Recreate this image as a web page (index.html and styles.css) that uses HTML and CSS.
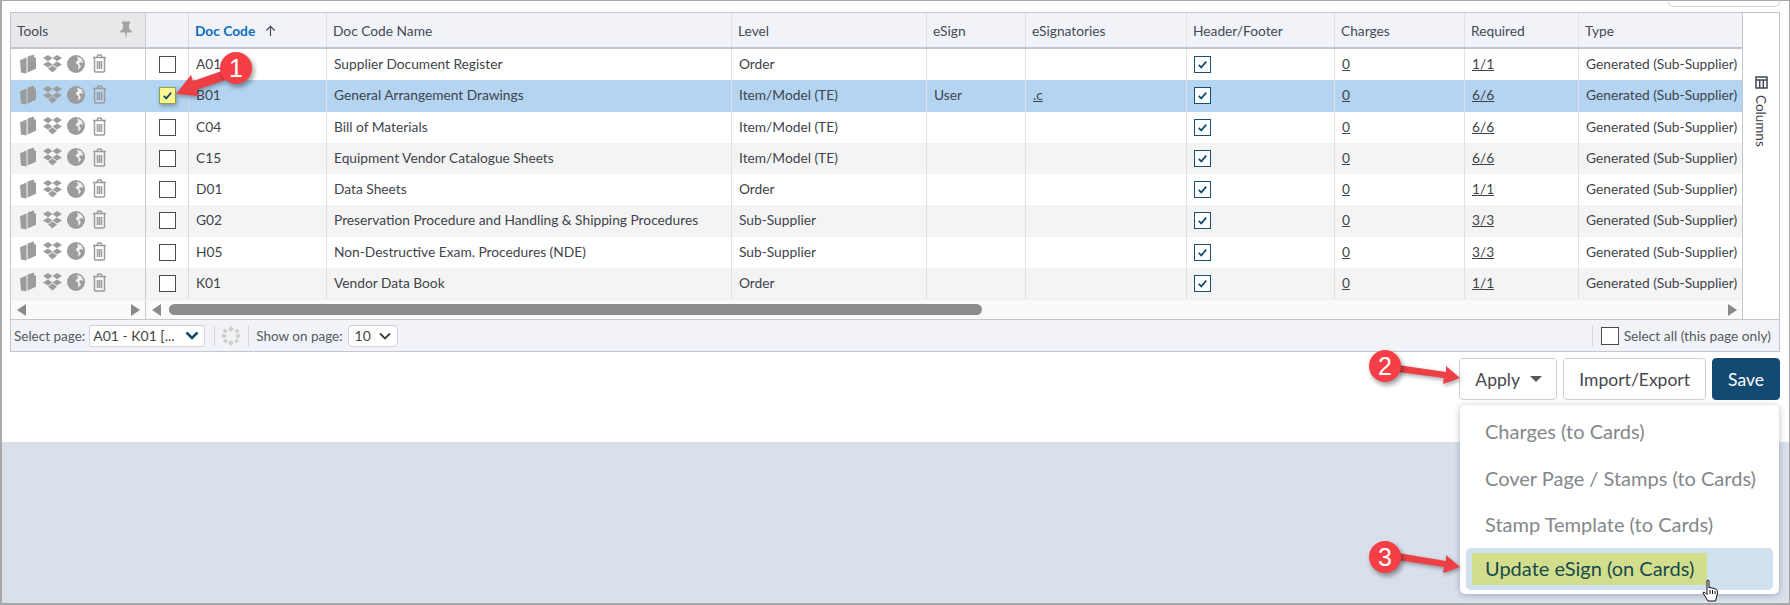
FILE: index.html
```html
<!DOCTYPE html>
<html lang="en">
<head>
<meta charset="utf-8">
<title>Doc Codes</title>
<link rel="stylesheet" href="styles.css">
</head>
<body>
<svg class="defs" width="0" height="0" aria-hidden="true">
  <symbol id="i-book" viewBox="0 0 17 20"><path d="M0 6 L7 3 L7 20 L1 19 Z M8 2 L15 0 L15 3 L17 3 L17 15 L8 19 Z" fill="currentColor"/></symbol>
  <symbol id="i-drop" viewBox="0 0 19 18"><path d="M5 0 L9.500 3 L5 6.200 L0 3 Z M14 0 L19 3 L14 6.200 L9.500 3 Z M5 6.400 L9.500 9.500 L5 12.600 L0 9.500 Z M14 6.400 L19 9.500 L14 12.600 L9.500 9.500 Z M5 13.600 L9.500 10.600 L14 13.600 L9.500 17.500 Z" fill="currentColor"/></symbol>
  <symbol id="i-globe" viewBox="0 0 18 18"><circle cx="9" cy="9" r="9" fill="currentColor"/><path d="M10 1.500 L14.500 3.500 L16.500 8 L14 7 L12 8.500 L14 11.500 L11 15 L11.500 10.500 L8.500 7.500 L11 5 Z" fill="#fff" opacity=".85"/></symbol>
  <symbol id="i-trash" viewBox="0 0 15 19"><path d="M1 3.500 H14 M5 3 L6 1 H9 L10 3 M2.500 4 V17 Q2.500 18 3.500 18 H11.500 Q12.500 18 12.500 17 V4 M5.500 7 V15 M7.500 7 V15 M9.500 7 V15" fill="none" stroke="currentColor" stroke-width="1.500"/></symbol>
  <symbol id="i-check" viewBox="0 0 18 18"><path d="M4.500 9.500 L7.500 12.500 L13.500 5.500" fill="none" stroke="#12486f" stroke-width="2"/></symbol>
</svg>

<div class="page">
  <section class="upper">
    <div class="stub"></div>
    <div class="grid">
      <div class="grid-main">
        <div class="row head">
          <div class="cell tools-head"><span>Tools</span>
            <svg class="pin" viewBox="0 0 12 17"><path d="M2 0 H10 V2 L9 3 V7 L12 10 V11 H7 L6 17 L5 11 H0 V10 L3 7 V3 L2 2 Z" fill="#a3a3a6"/></svg>
          </div>
          <div class="cell"></div>
          <div class="cell sorted">Doc Code
            <svg class="sort" viewBox="0 0 12 12"><path d="M6 12 V1.500 M1.500 6 L6 1.500 L10.500 6" fill="none" stroke="#444b55" stroke-width="1.300"/></svg>
          </div>
          <div class="cell">Doc Code Name</div>
          <div class="cell">Level</div>
          <div class="cell">eSign</div>
          <div class="cell">eSignatories</div>
          <div class="cell">Header/Footer</div>
          <div class="cell">Charges</div>
          <div class="cell">Required</div>
          <div class="cell">Type</div>
        </div>

        <div class="row">
          <div class="cell tools"><svg class="ic-book"><use href="#i-book"/></svg><svg class="ic-drop"><use href="#i-drop"/></svg><svg class="ic-globe"><use href="#i-globe"/></svg><svg class="ic-trash"><use href="#i-trash"/></svg></div>
          <div class="cell pick"><span class="box"></span></div>
          <div class="cell">A01</div>
          <div class="cell">Supplier Document Register</div>
          <div class="cell">Order</div>
          <div class="cell"></div>
          <div class="cell"></div>
          <div class="cell"><span class="box on"><svg><use href="#i-check"/></svg></span></div>
          <div class="cell"><a>0</a></div>
          <div class="cell"><a>1/1</a></div>
          <div class="cell">Generated (Sub-Supplier)</div>
        </div>

        <div class="row selected">
          <div class="cell tools"><svg class="ic-book"><use href="#i-book"/></svg><svg class="ic-drop"><use href="#i-drop"/></svg><svg class="ic-globe"><use href="#i-globe"/></svg><svg class="ic-trash"><use href="#i-trash"/></svg></div>
          <div class="cell pick"><span class="box marked"><svg><use href="#i-check"/></svg></span></div>
          <div class="cell">B01</div>
          <div class="cell">General Arrangement Drawings</div>
          <div class="cell">Item/Model (TE)</div>
          <div class="cell">User</div>
          <div class="cell"><a>.c</a></div>
          <div class="cell"><span class="box on"><svg><use href="#i-check"/></svg></span></div>
          <div class="cell"><a>0</a></div>
          <div class="cell"><a>6/6</a></div>
          <div class="cell">Generated (Sub-Supplier)</div>
        </div>

        <div class="row">
          <div class="cell tools"><svg class="ic-book"><use href="#i-book"/></svg><svg class="ic-drop"><use href="#i-drop"/></svg><svg class="ic-globe"><use href="#i-globe"/></svg><svg class="ic-trash"><use href="#i-trash"/></svg></div>
          <div class="cell pick"><span class="box"></span></div>
          <div class="cell">C04</div>
          <div class="cell">Bill of Materials</div>
          <div class="cell">Item/Model (TE)</div>
          <div class="cell"></div>
          <div class="cell"></div>
          <div class="cell"><span class="box on"><svg><use href="#i-check"/></svg></span></div>
          <div class="cell"><a>0</a></div>
          <div class="cell"><a>6/6</a></div>
          <div class="cell">Generated (Sub-Supplier)</div>
        </div>

        <div class="row alt">
          <div class="cell tools"><svg class="ic-book"><use href="#i-book"/></svg><svg class="ic-drop"><use href="#i-drop"/></svg><svg class="ic-globe"><use href="#i-globe"/></svg><svg class="ic-trash"><use href="#i-trash"/></svg></div>
          <div class="cell pick"><span class="box"></span></div>
          <div class="cell">C15</div>
          <div class="cell">Equipment Vendor Catalogue Sheets</div>
          <div class="cell">Item/Model (TE)</div>
          <div class="cell"></div>
          <div class="cell"></div>
          <div class="cell"><span class="box on"><svg><use href="#i-check"/></svg></span></div>
          <div class="cell"><a>0</a></div>
          <div class="cell"><a>6/6</a></div>
          <div class="cell">Generated (Sub-Supplier)</div>
        </div>

        <div class="row">
          <div class="cell tools"><svg class="ic-book"><use href="#i-book"/></svg><svg class="ic-drop"><use href="#i-drop"/></svg><svg class="ic-globe"><use href="#i-globe"/></svg><svg class="ic-trash"><use href="#i-trash"/></svg></div>
          <div class="cell pick"><span class="box"></span></div>
          <div class="cell">D01</div>
          <div class="cell">Data Sheets</div>
          <div class="cell">Order</div>
          <div class="cell"></div>
          <div class="cell"></div>
          <div class="cell"><span class="box on"><svg><use href="#i-check"/></svg></span></div>
          <div class="cell"><a>0</a></div>
          <div class="cell"><a>1/1</a></div>
          <div class="cell">Generated (Sub-Supplier)</div>
        </div>

        <div class="row alt">
          <div class="cell tools"><svg class="ic-book"><use href="#i-book"/></svg><svg class="ic-drop"><use href="#i-drop"/></svg><svg class="ic-globe"><use href="#i-globe"/></svg><svg class="ic-trash"><use href="#i-trash"/></svg></div>
          <div class="cell pick"><span class="box"></span></div>
          <div class="cell">G02</div>
          <div class="cell">Preservation Procedure and Handling &amp; Shipping Procedures</div>
          <div class="cell">Sub-Supplier</div>
          <div class="cell"></div>
          <div class="cell"></div>
          <div class="cell"><span class="box on"><svg><use href="#i-check"/></svg></span></div>
          <div class="cell"><a>0</a></div>
          <div class="cell"><a>3/3</a></div>
          <div class="cell">Generated (Sub-Supplier)</div>
        </div>

        <div class="row">
          <div class="cell tools"><svg class="ic-book"><use href="#i-book"/></svg><svg class="ic-drop"><use href="#i-drop"/></svg><svg class="ic-globe"><use href="#i-globe"/></svg><svg class="ic-trash"><use href="#i-trash"/></svg></div>
          <div class="cell pick"><span class="box"></span></div>
          <div class="cell">H05</div>
          <div class="cell">Non-Destructive Exam. Procedures (NDE)</div>
          <div class="cell">Sub-Supplier</div>
          <div class="cell"></div>
          <div class="cell"></div>
          <div class="cell"><span class="box on"><svg><use href="#i-check"/></svg></span></div>
          <div class="cell"><a>0</a></div>
          <div class="cell"><a>3/3</a></div>
          <div class="cell">Generated (Sub-Supplier)</div>
        </div>

        <div class="row alt">
          <div class="cell tools"><svg class="ic-book"><use href="#i-book"/></svg><svg class="ic-drop"><use href="#i-drop"/></svg><svg class="ic-globe"><use href="#i-globe"/></svg><svg class="ic-trash"><use href="#i-trash"/></svg></div>
          <div class="cell pick"><span class="box"></span></div>
          <div class="cell">K01</div>
          <div class="cell">Vendor Data Book</div>
          <div class="cell">Order</div>
          <div class="cell"></div>
          <div class="cell"></div>
          <div class="cell"><span class="box on"><svg><use href="#i-check"/></svg></span></div>
          <div class="cell"><a>0</a></div>
          <div class="cell"><a>1/1</a></div>
          <div class="cell">Generated (Sub-Supplier)</div>
        </div>

        <div class="scrollrow">
          <div class="scroll-left">
            <span class="arrow left"></span><span class="arrow right"></span>
          </div>
          <div class="scroll-right">
            <span class="arrow left"></span>
            <div class="track"><div class="thumb"></div></div>
            <span class="arrow right"></span>
          </div>
        </div>
      </div>

      <aside class="columns-tab">
        <svg class="columns-ic" viewBox="0 0 13 13"><path d="M1 1 H12 V12 H1 Z M1 4 H12 M4.700 4 V12 M8.300 4 V12" fill="none" stroke="#3d4650" stroke-width="1.500"/></svg>
        <span>Columns</span>
      </aside>

      <footer class="pager">
        <span>Select page:</span>
        <div class="select page-select"><span>A01 - K01 [...</span>
          <svg viewBox="0 0 14 9"><path d="M1.500 1.500 L7 7 L12.500 1.500" fill="none" stroke="#12486f" stroke-width="2.600"/></svg>
        </div>
        <i class="sep sep-a"></i>
        <svg class="spinner" viewBox="0 0 20 20"><g fill="#cfcfc9"><path d="M10 0 L13 3 L10 6 L7 3 Z"/><path d="M16 2.500 L18.500 5 L16 7.500 L13.500 5 Z"/><path d="M17 7.500 L20 10 L17 12.500 L14 10 Z"/><path d="M15.500 12.500 L18 15 L15.500 17.500 L13 15 Z"/><path d="M10 14 L13 17 L10 20 L7 17 Z"/><path d="M4.500 12.500 L7 15 L4.500 17.500 L2 15 Z"/><path d="M3 7.500 L6 10 L3 12.500 L0 10 Z"/><path d="M4 2.500 L6.500 5 L4 7.500 L1.500 5 Z"/></g></svg>
        <i class="sep sep-b"></i>
        <span>Show on page:</span>
        <div class="select size-select"><span>10</span>
          <svg viewBox="0 0 12 8"><path d="M1 1.500 L6 6.500 L11 1.500" fill="none" stroke="#3c3c3c" stroke-width="1.800"/></svg>
        </div>
        <div class="select-all">
          <i class="sep"></i>
          <span class="box plain"></span>
          <span>Select all (this page only)</span>
        </div>
      </footer>
    </div>

    <div class="actions">
      <button class="btn apply">Apply<span class="caret"></span></button>
      <button class="btn">Import/Export</button>
      <button class="btn primary">Save</button>
    </div>
  </section>
  <section class="lower"></section>

  <ul class="menu">
    <li>Charges (to Cards)</li>
    <li>Cover Page / Stamps (to Cards)</li>
    <li>Stamp Template (to Cards)</li>
    <li class="active"><span>Update eSign (on Cards)</span></li>
  </ul>

  <svg class="cursor" viewBox="0 0 16 23"><path d="M5 1.500 Q6.500 0.500 7 2 V9 L8 8.500 L10 9 L12 9.500 L14.500 10.500 Q15.500 11 15.500 14 L14 20 L13.500 22 H6 L1 14 Q1 12.500 3 13.500 L5 15.500 Z" fill="#fff" stroke="#111" stroke-width="1"/><path d="M8 11 V15 M10.500 11 V15 M13 12 V15" stroke="#111" stroke-width="1"/></svg>

  <svg class="annotations" viewBox="0 0 1790 605">
    <g class="arrow-mark">
      <path d="M222 71 L193 81 L191 75 L176 94 L199 96 L196 90 L225 80 Z"/>
      <path d="M1398 365 L1446 372 L1446 366 L1460 378 L1443 384 L1444 378 L1398 372 Z"/>
      <path d="M1398 553 L1446 561 L1446 555 L1460 567 L1443 573 L1444 567 L1398 560 Z"/>
    </g>
  </svg>
  <span class="badge b1">1</span>
  <span class="badge b2">2</span>
  <span class="badge b3">3</span>
</div>
</body>
</html>
```

FILE: styles.css
```css
* { box-sizing: border-box; }
html, body { margin: 0; padding: 0; }
body {
  width: 1790px;
  height: 605px;
  overflow: hidden;
  font-family: Lato, "Open Sans", sans-serif;
  font-size: 13.750px;
  color: #3f444b;
  background: #fff;
}
.defs { position: absolute; }

.page {
  position: relative;
  width: 1790px;
  height: 605px;
  display: flex;
  flex-direction: column;
  border: 2px solid #a9a9a9;
  border-right-width: 1px;
  border-top-width: 1px;
  overflow: hidden;
}

.upper { height: 441px; padding-left: 8px; padding-right: 9px; background: #fff; flex: none; }
.lower { flex: 1; background: #d9e0ec; }

.stub {
  width: 112px;
  height: 6px;
  margin-left: auto;
  margin-right: 0;
  border: 1px solid #d4d4d4;
  border-top: 0;
  border-radius: 0 0 5px 5px;
}

.grid {
  margin-top: 5px;
  height: 340px;
  display: grid;
  grid-template-columns: 1731px 1fr;
  grid-template-rows: 306px 32px;
  border: 1px solid #c3c6d0;
  background: #fff;
}

.grid-main { display: flex; flex-direction: column; min-width: 0; }

.row {
  display: grid;
  grid-template-columns: 135px 43px 138px 405px 195px 99px 161px 148px 130px 114px 163px;
  height: 31.25px;
  background: #fff;
}
.row.alt { background: #f4f4f4; }
.row.selected { background: #b3d5f2; }
.row.head {
  height: 36px;
  background: #f1f3f9;
  border-bottom: 2px solid #c3c6d0;
}

.cell {
  display: flex;
  align-items: center;
  min-width: 0;
  padding: 0 6px 2px 7px;
  border-right: 1px solid #dfe1e6;
  white-space: nowrap;
  overflow: hidden;
}
.cell:last-child { border-right: 0; padding-right: 0; }
.row .cell:nth-child(2) { border-right-color: #d8dae0; }
.row .cell:first-child { border-right-color: #c9ccd4; }
.head .cell { padding: 0 6px; color: #444b55; }
.head .tools-head { background: #e8e8eb; padding-left: 6px; justify-content: space-between; padding-right: 13px; }
.pin { width: 12px; height: 18px; }
.head .sorted { color: #0a6ebd; font-weight: 700; padding-left: 6px; }
.sort { width: 11px; height: 11px; margin-left: 10px; }

a { color: inherit; text-decoration: underline; }

.tools { padding: 0 0 2px 9px; gap: 0; color: #9c9c9c; }
.tools svg { flex: none; display: block; }
.ic-book { width: 16px; height: 20px; margin-right: 7px; }
.ic-drop { width: 19px; height: 18px; margin-right: 5px; }
.ic-globe { width: 18px; height: 18px; margin-right: 7px; }
.ic-trash { width: 15px; height: 19px; }

.pick { padding-left: 13px; }
.box {
  display: block;
  width: 17px;
  height: 17px;
  flex: none;
  margin-top: 2px;
  border: 1px solid #4b4b4b;
  background: #fff;
}
.box svg { display: block; width: 15px; height: 15px; }
.box.on { border-color: #164f78; }
.box.marked { background: #fbf78d; border-color: #8fa05a; box-shadow: 1px 2px 4px rgba(60, 70, 60, .45); }
.box.plain { width: 18px; height: 18px; margin-top: 0; }

.scrollrow {
  flex: 1;
  display: flex;
  background: #fafafa;
  border-top: 1px solid #eee;
}
.scroll-left {
  width: 135px;
  display: flex;
  align-items: center;
  justify-content: space-between;
  padding: 0 5px 0 6px;
  border-right: 1px solid #c9ccd4;
}
.scroll-right { flex: 1; display: flex; align-items: center; padding: 0 5px 0 6px; }
.arrow { width: 0; height: 0; border-style: solid; border-color: transparent; flex: none; }
.arrow.left { border-width: 6px 9px 6px 0; border-right-color: #8a8a8a; }
.arrow.right { border-width: 6px 0 6px 9px; border-left-color: #8a8a8a; }
.track { flex: 1; margin: 0 8px 0 8px; }
.thumb { width: 813px; height: 11px; border-radius: 6px; background: #8c8c8c; }

.columns-tab {
  grid-row: 1;
  grid-column: 2;
  border-left: 1px solid #c3c6d0;
  display: flex;
  flex-direction: column;
  align-items: center;
  padding: 63px 0 0 0;
  gap: 6px;
  background: #fff;
}
.columns-ic { width: 13px; height: 13px; }
.columns-tab span { writing-mode: vertical-rl; font-size: 13.500px; color: #3f444b; }

.pager {
  grid-column: 1 / -1;
  display: flex;
  align-items: center;
  padding: 0 8px 0 3px;
  background: #f1f3f9;
  border-top: 1px solid #c3c6d0;
  font-size: 13.500px;
  color: #555a61;
}
.select {
  display: flex;
  align-items: center;
  justify-content: space-between;
  height: 22px;
  background: #fff;
  border: 1px solid #d0d3da;
  border-radius: 2px;
  padding: 0 5px 0 3px;
  color: #444;
  font-size: 14px;
}
.page-select { width: 116px; margin-left: 4px; }
.page-select svg { width: 14px; height: 9px; }
.size-select { width: 50px; padding: 0 6px 0 6px; border-radius: 4px; margin-left: 5px; }
.size-select svg { width: 12px; height: 8px; }
.sep { display: block; width: 1px; height: 20px; background: #d5d7dd; flex: none; }
.sep-a { margin: 0 6px 0 9px; }
.sep-b { margin: 0 7px; }
.spinner { width: 20px; height: 20px; }
.select-all { margin-left: auto; display: flex; align-items: center; gap: 5px; font-size: 13.750px; }
.select-all .sep { margin: 0 3px 0 0; }

.actions { display: flex; justify-content: flex-end; gap: 6px; margin-top: 6px; }
.btn {
  height: 42px;
  padding: 0 15px;
  font: 400 17.500px Lato, sans-serif;
  color: #47494f;
  background: #fff;
  border: 1px solid #cfcfd3;
  border-radius: 4px;
  display: flex;
  align-items: center;
}
.btn.apply { width: 98px; padding: 0 15px; }
.btn.primary { background: #124a73; border-color: #124a73; color: #fff; width: 68px; justify-content: center; padding: 0; }
.caret {
  margin-left: 10px;
  width: 0;
  height: 0;
  border-style: solid;
  border-width: 6px 6px 0 6px;
  border-color: #55585e transparent transparent;
}

.menu {
  position: absolute;
  left: 1458px;
  top: 404px;
  width: 319px;
  height: 189px;
  margin: 0;
  padding: 3px 6px 4px;
  list-style: none;
  background: #fff;
  border-radius: 5px;
  box-shadow: 0 1px 6px rgba(70, 80, 100, .4);
  font-size: 20px;
  color: #84878b;
}
.menu li { height: 46.400px; display: flex; align-items: center; padding-left: 19px; }
.menu li.active {
  height: 42px;
  margin-top: 1px;
  padding-left: 6px;
  background: #cfe0ef;
  border-radius: 5px;
}
.menu li.active span {
  display: block;
  width: 235px;
  height: 32px;
  line-height: 31px;
  padding-left: 13px;
  background: #d2de8c;
  color: #174a4e;
}

.cursor { position: absolute; left: 1700px; top: 578px; width: 16px; height: 23px; }
.annotations { position: absolute; left: -2px; top: -1px; width: 1790px; height: 605px; pointer-events: none; }
.arrow-mark path { fill: #ee3f44; }
.arrow-mark { filter: drop-shadow(1px 2px 2px rgba(0, 0, 0, .35)); }

.badge {
  position: absolute;
  width: 32px;
  height: 32px;
  border-radius: 50%;
  background: #f53e45;
  color: #fff;
  font: 400 25px/32px "Liberation Sans", sans-serif;
  text-align: center;
  box-shadow: 2px 3px 5px rgba(0, 0, 0, .4);
}
.b1 { left: 218px; top: 51px; }
.b2 { left: 1367px; top: 349px; }
.b3 { left: 1367px; top: 540px; }
```
